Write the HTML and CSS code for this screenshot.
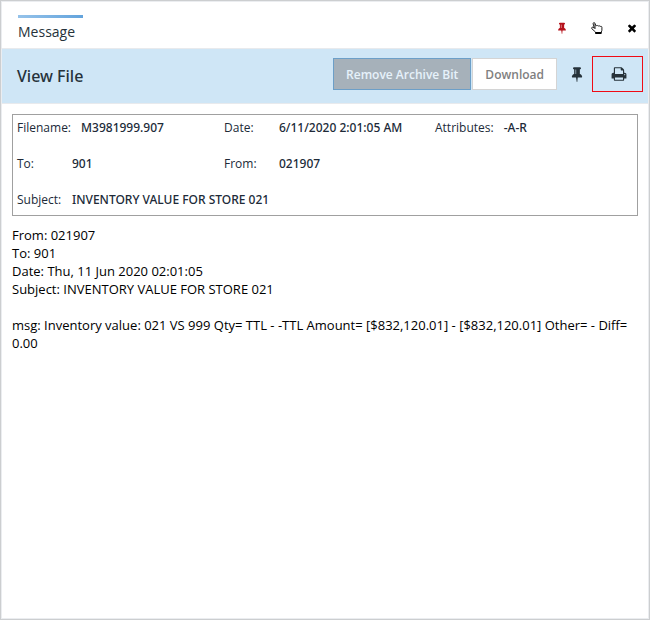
FILE: index.html
```html
<!DOCTYPE html>
<html lang="en">
<head>
<meta charset="utf-8">
<title>Message</title>
<link rel="stylesheet" href="styles.css">
</head>
<body>
<main class="window">
  <header class="titlebar">
    <h1 class="tab">Message</h1>
    <div class="window-actions">
      <button class="icon-button pin" type="button" aria-label="Pin window"><svg width="12" height="12" viewBox="0 0 1792 1792"><path d="M800 864v-448q0-14-9-23t-23-9-23 9-9 23v448q0 14 9 23t23 9 23-9 9-23zm672 352q0 26-19 45t-45 19h-429l-51 483q-2 12-10.5 20.5t-20.5 8.5h-1q-27 0-32-27l-76-485h-404q-26 0-45-19t-19-45q0-123 78.5-221.5t177.5-98.5v-512q-52 0-90-38t-38-90 38-90 90-38h640q52 0 90 38t38 90-38 90-90 38v512q99 0 177.5 98.5t78.5 221.5z"/></svg></button>
      <button class="icon-button" type="button" aria-label="Select"><svg width="12" height="12" viewBox="0 0 12 12"><path class="outline" d="M4 7V1.700C4 .2 2.100.2 2.100 1.700L3.300 6.100 2 5.300C.8 4.800.1 6.100 1 6.900L4.500 10V11.400H9.800L10.900 8.300V5.200C10.800 4.200 9.700 4 9.200 4.600 9 3.600 7.700 3.400 7.200 4.200 6.800 3.300 5.800 3.200 5.200 3.900L4 1.700"/><path d="M4.500 10H10.500V12H4.500Z"/></svg></button>
      <button class="icon-button" type="button" aria-label="Close"><svg width="12" height="12" viewBox="0 0 1792 1792"><path d="M1490 1322q0 40-28 68l-136 136q-28 28-68 28t-68-28l-294-294-294 294q-28 28-68 28t-68-28l-136-136q-28-28-28-68t28-68l294-294-294-294q-28-28-28-68t28-68l136-136q28-28 68-28t68 28l294 294 294-294q28-28 68-28t68 28l136 136q28 28 28 68t-28 68l-294 294 294 294q28 28 28 68z"/></svg></button>
    </div>
  </header>
  <section class="toolbar">
    <h2 class="heading">View File</h2>
    <div class="tools">
      <button class="button button-archive" type="button">Remove Archive Bit</button>
      <button class="button" type="button">Download</button>
      <button class="icon-button tool-pin" type="button" aria-label="Pin file"><svg width="16" height="16" viewBox="0 0 1792 1792"><path d="M800 864v-448q0-14-9-23t-23-9-23 9-9 23v448q0 14 9 23t23 9 23-9 9-23zm672 352q0 26-19 45t-45 19h-429l-51 483q-2 12-10.5 20.5t-20.5 8.5h-1q-27 0-32-27l-76-485h-404q-26 0-45-19t-19-45q0-123 78.5-221.5t177.5-98.5v-512q-52 0-90-38t-38-90 38-90 90-38h640q52 0 90 38t38 90-38 90-90 38v512q99 0 177.5 98.5t78.5 221.5z"/></svg></button>
      <button class="icon-button print" type="button" aria-label="Print"><svg width="16" height="16" viewBox="0 0 1792 1792"><path d="M448 1536h896v-256h-896v256zm0-640h896v-384h-160q-40 0-68-28t-28-68v-160h-640v640zm1152 64q0-26-19-45t-45-19-45 19-19 45 19 45 45 19 45-19 19-45zm128 0v416q0 13-9.5 22.5t-22.5 9.5h-224v160q0 40-28 68t-68 28h-960q-40 0-68-28t-28-68v-160h-224q-13 0-22.5-9.5t-9.5-22.5v-416q0-79 56.5-135.500t135.500-56.500h64v-544q0-40 28-68t68-28h672q40 0 88 20t76 48l152 152q28 28 48 76t20 88v256h64q79 0 135.500 56.500t56.500 135.500z"/></svg></button>
    </div>
  </section>
  <dl class="details">
    <div class="field"><dt>Filename:</dt><dd>M3981999.907</dd></div>
    <div class="field"><dt>Date:</dt><dd>6/11/2020 2:01:05 AM</dd></div>
    <div class="field"><dt>Attributes:</dt><dd>-A-R</dd></div>
    <div class="field"><dt>To:</dt><dd>901</dd></div>
    <div class="field"><dt>From:</dt><dd>021907</dd></div>
    <div class="field wide"><dt>Subject:</dt><dd>INVENTORY VALUE FOR STORE 021</dd></div>
  </dl>
  <article class="message">
    <p>From: 021907<br>To: 901<br>Date: Thu, 11 Jun 2020 02:01:05<br>Subject: INVENTORY VALUE FOR STORE 021</p>
    <p>msg: Inventory value: 021 VS 999 Qty= TTL - -TTL Amount= [$832,120.01] - [$832,120.01] Other= - Diff= 0.00</p>
  </article>
</main>
</body>
</html>
```

FILE: styles.css
```css
* {
  box-sizing: border-box;
}

body {
  margin: 0;
  background: #fff;
  color: #000;
  font-family: "Open Sans", sans-serif;
  font-size: 13px;
  line-height: 18px;
}

h1, h2, p, dl, dd {
  margin: 0;
}

button {
  font-family: inherit;
  cursor: pointer;
}

.window {
  min-height: 100vh;
  border: 1px solid #ccced0;
  box-shadow: inset 0 0 0 1px #ebedf0;
}

.titlebar {
  display: flex;
  justify-content: space-between;
  align-items: flex-start;
  height: 48px;
  padding: 14px 9px 0 17px;
  border-bottom: 1px solid #e8eaed;
}

.tab {
  min-width: 65px;
  padding-top: 4px;
  border-top: 3px solid;
  border-image: linear-gradient(to right, #96c3ea, #62a3dc) 1;
  color: #26323a;
  font-size: 14px;
  font-weight: 400;
  line-height: 20px;
}

.window-actions {
  display: flex;
  gap: 19px;
  padding-top: 5px;
}

.icon-button {
  display: flex;
  align-items: center;
  justify-content: center;
  width: 16px;
  height: 16px;
  padding: 0;
  border: 0;
  background: none;
  color: #000;
}

.icon-button svg {
  flex: none;
  fill: currentColor;
}

.icon-button .outline {
  fill: #fff;
  stroke: #222;
  stroke-width: 1;
  stroke-linejoin: round;
}

.pin {
  color: #b5121b;
}

.toolbar {
  display: flex;
  align-items: center;
  justify-content: space-between;
  height: 55px;
  margin: 0 1px;
  padding: 0 5px 4px 15px;
  border-bottom: 1px solid #e8eaed;
  background: #cfe6f6;
}

.heading {
  padding-top: 4px;
  color: #26323a;
  font-family: "Noto Sans", "Open Sans", sans-serif;
  font-size: 16px;
  font-weight: 500;
  line-height: 24px;
}

.tools {
  display: flex;
  align-items: center;
}

.button {
  height: 32px;
  padding: 0 12px;
  border: 1px solid #d4d4d4;
  background: #fff;
  color: #808080;
  font-size: 12px;
  font-weight: 600;
}

.button-archive {
  margin-right: 1px;
  border-color: #6c9fc8;
  background: #a6b1ba;
  color: #e6f2fa;
}

.tool-pin {
  margin: 0 7px 0 12px;
  color: #26323a;
}

.print {
  width: 51px;
  height: 36px;
  padding: 0 0 0 2px;
  border: 1px solid #f00a14;
  color: #26323a;
}

.details {
  display: grid;
  grid-template-columns: 207px 211px 1fr;
  row-gap: 18px;
  margin: 10px 11px 0;
  padding: 4px 4px 6px;
  border: 1px solid #a0a0a0;
  color: #202a38;
  font-size: 12px;
}

.field {
  display: flex;
  gap: 10px;
}

.field dt {
  min-width: 45px;
}

.field dd {
  font-family: "Noto Sans", "Open Sans", sans-serif;
  font-weight: 500;
}

.wide {
  grid-column: 1 / -1;
}

.message {
  display: grid;
  gap: 18px;
  padding: 10px 10px 10px 11px;
}
```
